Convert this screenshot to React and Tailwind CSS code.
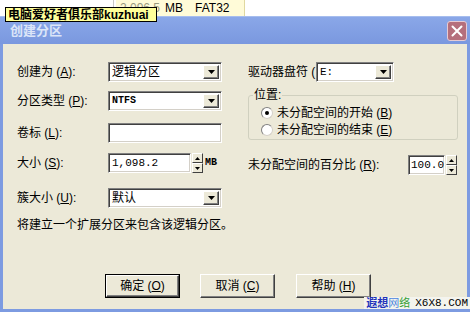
import React from "react";

const SANS = "font-['Liberation_Sans','Noto_Sans_CJK_SC',sans-serif]";
const MONO = "font-['Liberation_Mono','Noto_Sans_CJK_SC',monospace]";

function DropBtn() {
  return (
    <div className="flex w-[16px] items-center justify-center border border-t-white border-l-white border-r-[#404040] border-b-[#404040] bg-[#ece9d8] shadow-[inset_-1px_-1px_0_#808080]">
      <svg width="7" height="4" viewBox="0 0 7 4">
        <path d="M0 0h7L3.5 4z" fill="#000" />
      </svg>
    </div>
  );
}

function Sunken({ className = "", children }) {
  return (
    <div
      className={`flex h-[20px] border border-[#808080] border-r-white border-b-white bg-white shadow-[inset_1px_1px_0_#404040,inset_-1px_-1px_0_#d4d0c8] ${className}`}
    >
      {children}
    </div>
  );
}

function Combo({ className, children }) {
  return (
    <Sunken className={`p-[2px] ${className}`}>
      <div className="flex flex-1 items-center pl-[1px] text-[12px] leading-none text-black">{children}</div>
      <DropBtn />
    </Sunken>
  );
}

function SpinBtn({ up }) {
  return (
    <div className="flex flex-1 items-center justify-center border border-t-white border-l-white border-r-[#404040] border-b-[#404040] bg-[#ece9d8]">
      <svg width="5" height="3" viewBox="0 0 5 3">
        <path d={up ? "M2.5 0L5 3H0z" : "M0 0h5L2.5 3z"} fill="#000" />
      </svg>
    </div>
  );
}

function Spin() {
  return (
    <div className="ml-[1px] flex h-[20px] w-[11px] flex-col">
      <SpinBtn up />
      <SpinBtn />
    </div>
  );
}

function Radio({ checked }) {
  return (
    <div className="flex h-[12px] w-[12px] items-center justify-center rounded-full border border-[#808080] border-r-[#d4d0c8] border-b-[#d4d0c8] bg-white">
      {checked && <div className="h-[4px] w-[4px] rounded-full bg-black" />}
    </div>
  );
}

function Btn({ children, def }) {
  return (
    <div
      className={`flex h-[24px] w-[75px] items-center justify-center ${
        def ? "border border-black" : ""
      }`}
    >
      <div className="flex h-full w-full items-center justify-center border border-t-white border-l-white border-r-[#404040] border-b-[#404040] bg-[#ece9d8] text-[12px] text-black shadow-[inset_-1px_-1px_0_#808080]">
        {children}
      </div>
    </div>
  );
}

function Label({ className = "", children }) {
  return <div className={`flex items-center whitespace-nowrap text-[12px] leading-none text-black ${className}`}>{children}</div>;
}

export default function App() {
  return (
    <div className={`relative flex h-[312px] w-[470px] flex-col overflow-hidden bg-white ${SANS}`}>
      {/* top strip */}
      <div className="flex h-[16px] shrink-0 items-stretch bg-white">
        <div className="w-[113px]" />
        <div className="w-[1px] bg-[#c8c8c8]" />
        <div className="w-[2px]" />
        <div className="flex w-[129px] items-center whitespace-nowrap border-r border-[#e0d8a0] bg-[#fffbd8] pl-[4px] text-[12px] leading-none">
          <span className="text-[#9a9a80]">2,096.5</span>
          <span className="ml-[5px] text-black">MB</span>
          <span className="ml-[12px] text-black">FAT32</span>
        </div>
      </div>

      {/* window */}
      <div className="flex flex-1 flex-col bg-[#7d9be1]">
        <div className="flex h-[28px] shrink-0 items-center justify-between border-t border-[#a6bdee] bg-gradient-to-b from-[#8aa7e8] to-[#7a98df] pl-[10px] pr-[3px]">
          <span className="text-[13px] font-bold leading-none text-[#dbe5f8]">创建分区</span>
          <div className="flex h-[20px] w-[20px] items-center justify-center rounded-[3px] border border-[#e6cbd3] bg-[#b56f7c]">
            <svg width="12" height="12" viewBox="0 0 12 12">
              <path d="M1.5 1.5L10.5 10.5M10.5 1.5L1.5 10.5" stroke="#fff" strokeWidth="2" strokeLinecap="round" />
            </svg>
          </div>
        </div>

        <div className="flex flex-1 px-[3px] pb-[3px]">
          <div className="flex flex-1 flex-col bg-[#ece9d8] pl-[14px] pt-[18px]">
            <div className="flex items-start">
              {/* left column */}
              <div className="flex w-[205px] flex-col">
                <div className="flex h-[20px]">
                  <Label className="w-[91px]">创建为 (<u>A</u>):</Label>
                  <Combo className="w-[114px]">逻辑分区</Combo>
                </div>
                <div className="mt-[9px] flex h-[20px]">
                  <Label className="w-[91px]">分区类型 (<u>P</u>):</Label>
                  <Combo className="w-[114px]">
                    <span className={`${MONO} text-[10px] font-bold`}>NTFS</span>
                  </Combo>
                </div>
                <div className="mt-[12px] flex h-[20px]">
                  <Label className="w-[91px]">卷标 (<u>L</u>):</Label>
                  <Sunken className="w-[114px]" />
                </div>
                <div className="mt-[10px] flex h-[20px] items-center">
                  <Label className="w-[91px]">大小 (<u>S</u>):</Label>
                  <Sunken className="w-[83px] items-center pl-[3px]">
                    <span className={`${MONO} text-[11px] leading-none`}>1,098.2</span>
                  </Sunken>
                  <Spin />
                  <span className={`${MONO} ml-[2px] text-[10px] font-bold leading-none`}>MB</span>
                </div>
                <div className="mt-[15px] flex h-[20px]">
                  <Label className="w-[91px]">簇大小 (<u>U</u>):</Label>
                  <Combo className="w-[114px]">默认</Combo>
                </div>
              </div>

              <div className="w-[26px]" />

              {/* right column */}
              <div className="flex w-[210px] flex-col">
                <div className="flex h-[20px]">
                  <Label className="w-[68px] overflow-hidden">驱动器盘符 (</Label>
                  <Combo className="w-[78px]">
                    <span className={`${MONO} text-[11px]`}>E:</span>
                  </Combo>
                </div>
                <div className="relative mt-[13px] h-[45px] rounded-[3px] border border-[#d0d0bf] pl-[12px] pt-[10px]">
                  <div className="absolute left-[4px] top-[-8px] bg-[#ece9d8] px-[1px] text-[12px] leading-[14px]">位置:</div>
                  <div className="flex h-[14px] items-center gap-[4px]">
                    <Radio checked />
                    <Label>未分配空间的开始 (<u>B</u>)</Label>
                  </div>
                  <div className="mt-[3px] flex h-[14px] items-center gap-[4px]">
                    <Radio />
                    <Label>未分配空间的结束 (<u>E</u>)</Label>
                  </div>
                </div>
                <div className="mt-[15px] flex h-[20px]">
                  <Label className="w-[160px]">未分配空间的百分比 (<u>R</u>):</Label>
                  <Sunken className="w-[37px] items-center pl-[2px]">
                    <span className={`${MONO} text-[11px] leading-none`}>100.0</span>
                  </Sunken>
                  <Spin />
                </div>
              </div>
            </div>

            <Label className="mt-[10px] h-[14px]">将建立一个扩展分区来包含该逻辑分区。</Label>

            <div className="mt-auto flex pb-[11px] pl-[88px]">
              <Btn def>确定 (<u>O</u>)</Btn>
              <div className="w-[20px]" />
              <Btn>取消 (<u>C</u>)</Btn>
              <div className="w-[21px]" />
              <Btn>帮助 (<u>H</u>)</Btn>
            </div>
          </div>
        </div>
      </div>

      {/* yellow caption overlay */}
      <div className="absolute left-[5px] top-[7px] flex h-[15px] w-[152px] items-center whitespace-nowrap border border-black bg-[#ffff99] pl-[2px] text-[12px] font-bold leading-none text-black">
        电脑爱好者俱乐部kuzhuai
      </div>

      {/* watermark */}
      <div className="absolute bottom-[3px] right-0 flex h-[12px] items-center whitespace-nowrap bg-[#f4f4ee] pl-[2px] pr-[2px] text-[11px] leading-none">
        <span className="font-bold text-[#2233bb]">遐想</span>
        <span className="text-[#4a86e0]">网</span>
        <span className="text-[#33a033]">络</span>
        <span className={`${MONO} ml-[5px] text-[11px] text-black`}>X6X8.COM</span>
      </div>
    </div>
  );
}
